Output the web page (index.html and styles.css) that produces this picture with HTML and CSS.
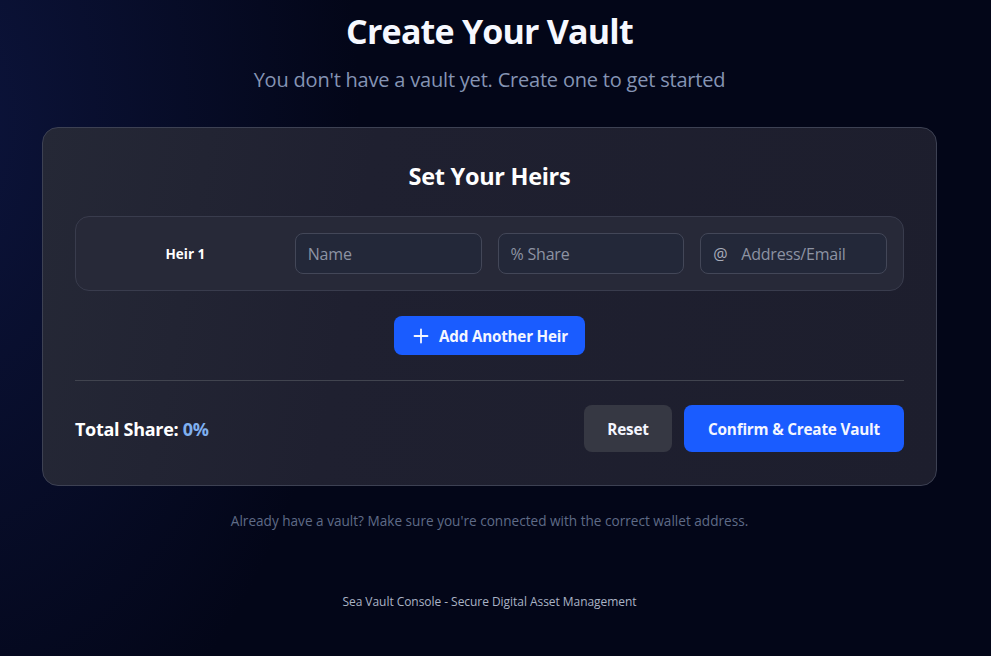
FILE: index.html
```html
<!DOCTYPE html>
<html lang="en">
<head>
<meta charset="utf-8">
<title>Create Your Vault</title>
<link rel="stylesheet" href="styles.css">
</head>
<body>
<div class="page">
  <main class="main">
    <header class="hero">
      <h1 class="title">Create Your Vault</h1>
      <p class="subtitle">You don't have a vault yet. Create one to get started</p>
    </header>

    <section class="card">
      <h2 class="card-title">Set Your Heirs</h2>

      <div class="heir-row">
        <div class="heir-label">Heir 1</div>
        <div class="field"><input class="input" type="text" placeholder="Name"></div>
        <div class="field"><input class="input" type="text" placeholder="% Share"></div>
        <div class="field field-icon">
          <span class="at">@</span>
          <input class="input input-pad" type="text" placeholder="Address/Email">
        </div>
      </div>

      <div class="add-wrap">
        <button class="btn btn-primary btn-add">
          <svg class="plus" viewBox="0 0 16 16" width="16" height="16" aria-hidden="true"><path d="M8 1.5v13M1.5 8h13" stroke="currentColor" stroke-width="1.8" stroke-linecap="round" fill="none"/></svg>
          Add Another Heir
        </button>
      </div>

      <hr class="divider">

      <div class="card-footer">
        <div class="total">Total Share: <span class="total-val">0%</span></div>
        <div class="actions">
          <button class="btn btn-secondary btn-lg">Reset</button>
          <button class="btn btn-primary btn-lg btn-confirm">Confirm &amp; Create Vault</button>
        </div>
      </div>
    </section>

    <p class="note">Already have a vault? Make sure you're connected with the correct wallet address.</p>
  </main>

  <footer class="site-footer">Sea Vault Console - Secure Digital Asset Management</footer>
</div>
</body>
</html>
```

FILE: styles.css
```css
* { box-sizing: border-box; }

html, body {
  margin: 0;
  height: 100%;
}

body {
  font-family: "Open Sans", "Noto Sans", "Liberation Sans", sans-serif;
  color: #fff;
  background-color: #030618;
  background-image:
    radial-gradient(ellipse 420px 700px at -60px 120px, rgba(20, 32, 90, 0.55), rgba(3, 6, 24, 0) 100%);
  overflow: hidden;
}

.page {
  min-height: 100%;
  display: flex;
  flex-direction: column;
  padding-right: 12px;
}

.main {
  width: 895px;
  margin: 0 auto;
}

.hero {
  text-align: center;
  padding-top: 8px;
}

.title {
  margin: 0;
  font-size: 34px;
  line-height: 46px;
  font-weight: 700;
  letter-spacing: -0.8px;
  color: #f6f8ff;
}

.subtitle {
  margin: 12px 0 0;
  font-size: 20px;
  line-height: 28px;
  font-weight: 400;
  letter-spacing: -0.2px;
  color: #8594b4;
}

.card {
  margin-top: 33px;
  border: 1px solid #3d4153;
  border-radius: 16px;
  padding: 32px 32px 33px;
  background: linear-gradient(100deg, #252836 0%, #1f2030 35%, #1d1e2d 100%);
}

.card-title {
  margin: 0;
  text-align: center;
  font-size: 23.5px;
  line-height: 32px;
  font-weight: 700;
  letter-spacing: -0.3px;
  color: #fff;
}

.heir-row {
  margin-top: 24px;
  display: grid;
  grid-template-columns: repeat(4, 1fr);
  gap: 16px;
  align-items: center;
  padding: 16px;
  border: 1px solid #393c4d;
  border-radius: 14px;
  background: #272938;
}

.heir-label {
  text-align: center;
  font-size: 13.5px;
  font-weight: 700;
  color: #fff;
}

.field {
  position: relative;
}

.input {
  display: block;
  width: 100%;
  height: 41px;
  padding: 0 12px;
  border: 1px solid #434758;
  border-radius: 8px;
  background: #232839;
  color: #fff;
  font-family: inherit;
  font-size: 16px;
  letter-spacing: -0.2px;
  outline: none;
}

.input::placeholder {
  color: #8d93a3;
}

.input-pad {
  padding-left: 40px;
}

.at {
  position: absolute;
  left: 13px;
  top: 50%;
  transform: translateY(-52%);
  font-size: 16px;
  color: #a7acba;
  pointer-events: none;
}

.add-wrap {
  margin-top: 25px;
  display: flex;
  justify-content: center;
}

.btn {
  border: 0;
  font-family: inherit;
  font-weight: 700;
  color: #f4f6ff;
  cursor: pointer;
  display: inline-flex;
  align-items: center;
  justify-content: center;
}

.btn-primary {
  background: #1a5cff;
}

.btn-secondary {
  background: #363843;
}

.btn-add {
  height: 39px;
  padding: 0 17px 0 19px;
  border-radius: 8px;
  font-size: 15.2px;
  letter-spacing: -0.2px;
  gap: 10px;
}

.plus {
  display: block;
}

.divider {
  margin: 25px 0 0;
  border: 0;
  border-top: 1px solid #41444f;
}

.card-footer {
  margin-top: 24px;
  display: flex;
  align-items: center;
  justify-content: space-between;
}

.total {
  font-size: 18px;
  font-weight: 700;
  letter-spacing: -0.3px;
  color: #fff;
}

.total-val {
  color: #7fb0f0;
}

.actions {
  display: flex;
  gap: 12px;
}

.btn-lg {
  height: 47px;
  border-radius: 8px;
  font-size: 15.3px;
  letter-spacing: -0.2px;
}

.btn-secondary.btn-lg {
  width: 88px;
}

.btn-confirm {
  width: 220px;
}

.note {
  margin: 25px 0 0;
  text-align: center;
  font-size: 13.6px;
  color: #5f6b87;
}

.site-footer {
  margin-top: 63px;
  text-align: center;
  font-size: 12px;
  letter-spacing: -0.05px;
  color: #aab3c5;
}
```
